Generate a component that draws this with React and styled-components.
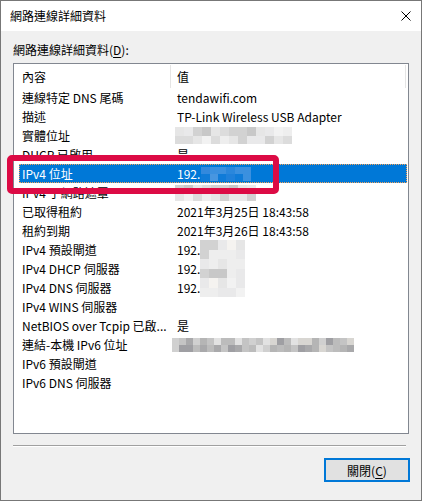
import React from "react";
import styled, { createGlobalStyle } from "styled-components";

const Global = createGlobalStyle`
  html, body { margin: 0; padding: 0; background: #ffffff; }
  body { font-family: "Noto Sans CJK TC", "Noto Sans", sans-serif; font-size: 12px; color: #000; }
  * { box-sizing: border-box; }
`;

const Window = styled.div`
  position: relative;
  width: 422px;
  height: 501px;
  border: 1px solid #777777;
  display: flex;
  flex-direction: column;
  background: #f0f0f0;
`;

const TitleBar = styled.div`
  height: 30px;
  background: #ffffff;
  display: flex;
  align-items: center;
  justify-content: space-between;
  padding: 0 9px 0 9px;
  flex: none;
`;

const Title = styled.span`
  font-size: 12px;
  line-height: 16px;
  color: #000;
`;

const CloseBtn = styled.div`
  width: 10px;
  height: 10px;
  margin-right: 1px;
  display: flex;
`;

const Content = styled.div`
  flex: 1;
  display: flex;
  flex-direction: column;
  padding: 10px 12px 0 12px;
`;

const GroupLabel = styled.div`
  height: 22px;
  line-height: 18px;
  padding-left: 0;
  u { text-decoration: underline; text-underline-offset: 2px; }
`;

const ListBox = styled.div`
  height: 371px;
  background: #ffffff;
  border: 1px solid #828790;
  display: flex;
  flex-direction: column;
  overflow: hidden;
`;

const HeaderRow = styled.div`
  height: 24px;
  display: grid;
  grid-template-columns: 157px 235px 1fr;
  flex: none;
`;

const HeaderCell = styled.div`
  display: flex;
  align-items: center;
  padding-left: ${(p) => p.$pad}px;
  border-right: ${(p) => (p.$sep ? "1px solid #e5e5e5" : "none")};
  margin-top: 1px;
`;

const Row = styled.div`
  height: 19px;
  margin: 0 1px 0 5px;
  display: grid;
  grid-template-columns: 152px 1fr;
  align-items: center;
  flex: none;
  background: ${(p) => (p.$selected ? "#0078d7" : "transparent")};
  color: ${(p) => (p.$selected ? "#ffffff" : "#000000")};
  outline: ${(p) => (p.$selected ? "1px dotted #f3a35a" : "none")};
  outline-offset: -1px;
`;

const NameCell = styled.div`
  padding: 0 2px 0 3px;
  white-space: nowrap;
  overflow: hidden;
  text-overflow: ellipsis;
  line-height: 19px;
`;

const ValueCell = styled.div`
  padding-left: 6px;
  white-space: nowrap;
  display: flex;
  align-items: center;
  height: 19px;
  line-height: 19px;
`;

const MosaicGrid = styled.div`
  display: grid;
  grid-template-columns: repeat(${(p) => p.$cols}, ${(p) => p.$cw}px);
  grid-auto-rows: ${(p) => p.$ch}px;
  margin-left: ${(p) => p.$ml || 0}px;
`;

const Cell = styled.div``;

const Separator = styled.div`
  height: 2px;
  margin: 11px 3px 0 0;
  border-top: 1px solid #a0a0a0;
  border-bottom: 1px solid #ffffff;
`;

const Footer = styled.div`
  display: flex;
  justify-content: flex-end;
  padding: 11px 0 0 0;
  margin-right: -1px;
`;

const Button = styled.div`
  width: 86px;
  height: 24px;
  background: #e1e1e1;
  border: 2px solid #0078d7;
  display: flex;
  align-items: center;
  justify-content: center;
  font-size: 12px;
  u { text-decoration: underline; text-underline-offset: 2px; }
`;

const Highlight = styled.div`
  position: absolute;
  left: 6px;
  top: 154px;
  width: 272px;
  height: 39px;
  border: 6px solid #dc0b45;
  border-radius: 5px;
  pointer-events: none;
`;

function rand(seed) {
  let x = Math.sin(seed * 9301 + 49297) * 233280;
  return x - Math.floor(x);
}

function Mosaic({ cols, rows, cw, ch, ml, palette, seed }) {
  const cells = [];
  for (let r = 0; r < rows; r++) {
    for (let c = 0; c < cols; c++) {
      const v = rand(seed + r * 31 + c * 7);
      const col = palette[Math.floor(v * palette.length)];
      cells.push(<Cell key={r + "-" + c} style={{ background: col }} />);
    }
  }
  return (
    <MosaicGrid $cols={cols} $cw={cw} $ch={ch} $ml={ml}>
      {cells}
    </MosaicGrid>
  );
}

const grays = ["#e6e6e6", "#eeeeee", "#dcdcdc", "#f2f2f2", "#d2d2d2", "#e9e9ea", "#c8c8c8", "#f5f3f0"];
const darker = ["#c4c4c4", "#b5b5b5", "#d0d0d0", "#a9a9ab", "#e2e2e2", "#bcbcbc", "#9f9fa3", "#d8d6d2"];
const blues = ["#2a87dc", "#3b90df", "#1f80da", "#4896e0", "#0f7bd8", "#3389dd"];

const rows = [
  { k: "連線特定 DNS 尾碼", v: "tendawifi.com" },
  { k: "描述", v: "TP-Link Wireless USB Adapter" },
  { k: "實體位址", v: null, m: { cols: 13, rows: 2, cw: 9, ch: 8.5, palette: grays, seed: 3, ml: -2 } },
  { k: "DHCP 已啟用", v: "是" },
  { k: "IPv4 位址", v: "192.", sel: true, m: { cols: 6, rows: 2, cw: 8.3, ch: 7, palette: blues, seed: 11, ml: 1 } },
  { k: "IPv4 子網路遮罩", v: null, m: { cols: 9, rows: 2, cw: 9, ch: 8, palette: grays, seed: 17, ml: -2 } },
  { k: "已取得租約", v: "2021年3月25日 18:43:58" },
  { k: "租約到期", v: "2021年3月26日 18:43:58" },
  { k: "IPv4 預設閘道", v: "192.", m: { cols: 5, rows: 2, cw: 9, ch: 9.5, palette: grays, seed: 23 } },
  { k: "IPv4 DHCP 伺服器", v: "192.", m: { cols: 5, rows: 2, cw: 9, ch: 9.5, palette: grays, seed: 29 } },
  { k: "IPv4 DNS 伺服器", v: "192.", m: { cols: 5, rows: 2, cw: 9, ch: 9.5, palette: grays, seed: 37 } },
  { k: "IPv4 WINS 伺服器", v: "" },
  { k: "NetBIOS over Tcpip 已啟...", v: "是" },
  { k: "連結-本機 IPv6 位址", v: null, m: { cols: 26, rows: 2, cw: 7, ch: 7, palette: darker, seed: 41, ml: -5 } },
  { k: "IPv6 預設閘道", v: "" },
  { k: "IPv6 DNS 伺服器", v: "" },
];

export default function App() {
  return (
    <>
      <Global />
      <Window>
        <TitleBar>
          <Title>網路連線詳細資料</Title>
          <CloseBtn>
            <svg width="10" height="10" viewBox="0 0 10 10">
              <path d="M0.5 0.5 L9.5 9.5 M9.5 0.5 L0.5 9.5" stroke="#000" strokeWidth="1" fill="none" />
            </svg>
          </CloseBtn>
        </TitleBar>
        <Content>
          <GroupLabel>
            網路連線詳細資料(<u>D</u>):
          </GroupLabel>
          <ListBox>
            <HeaderRow>
              <HeaderCell $pad={8} $sep>內容</HeaderCell>
              <HeaderCell $pad={6} $sep>值</HeaderCell>
              <HeaderCell $pad={0} />
            </HeaderRow>
            {rows.map((r) => (
              <Row key={r.k} $selected={r.sel}>
                <NameCell>{r.k}</NameCell>
                <ValueCell>
                  {r.v}
                  {r.m && <Mosaic {...r.m} />}
                </ValueCell>
              </Row>
            ))}
          </ListBox>
          <Separator />
          <Footer>
            <Button>
              關閉(<u>C</u>)
            </Button>
          </Footer>
        </Content>
        <Highlight />
      </Window>
    </>
  );
}
